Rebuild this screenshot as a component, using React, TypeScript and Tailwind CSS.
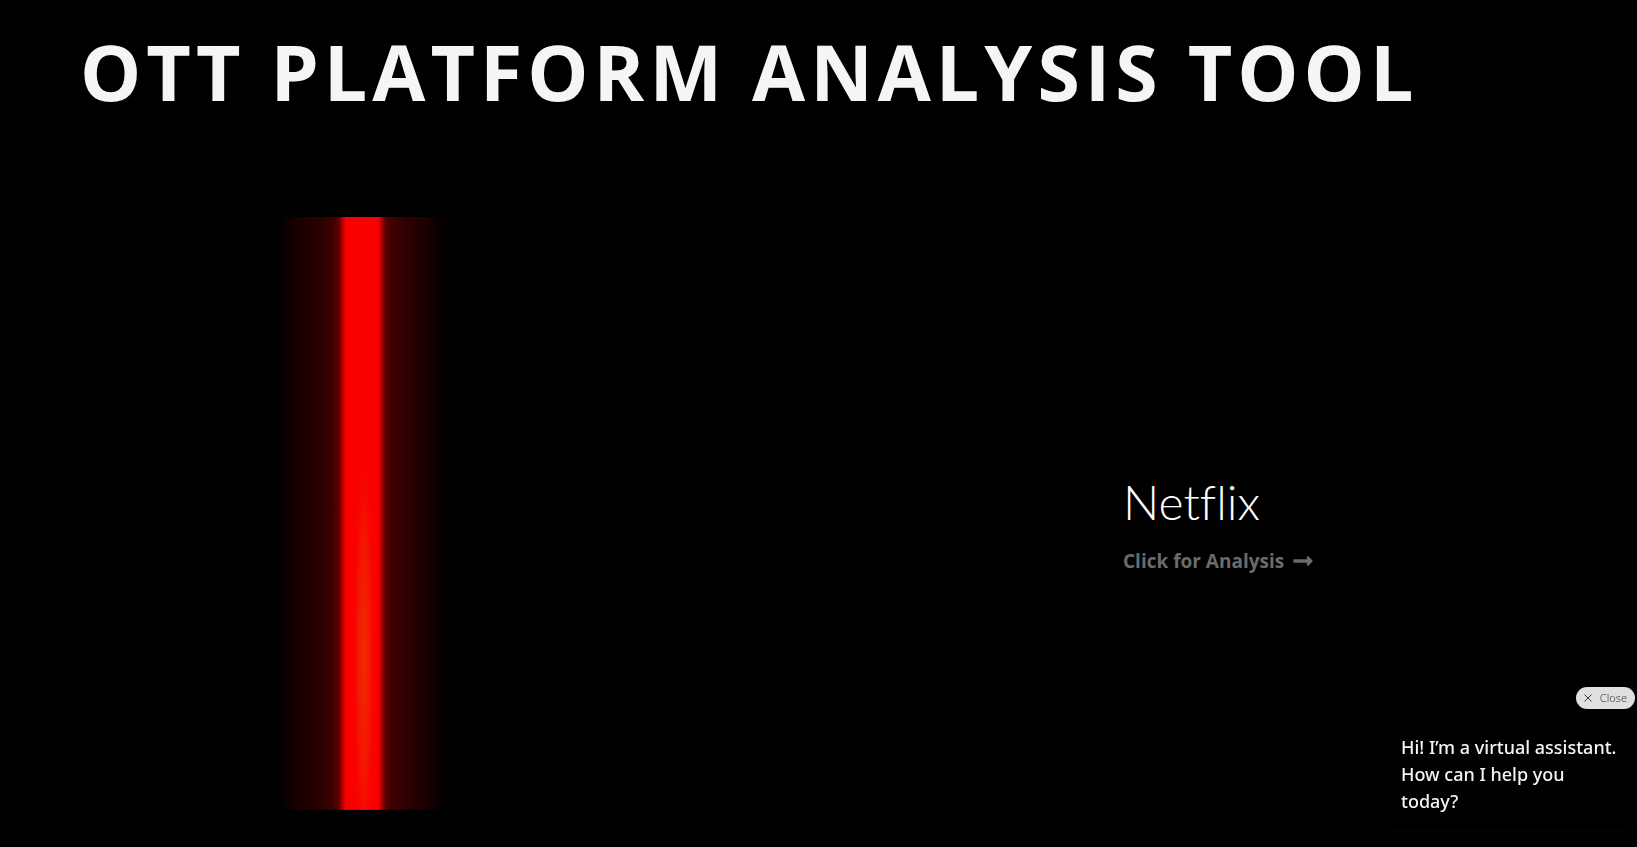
import { FaLongArrowAltRight } from "react-icons/fa";
import { useState } from "react";

function NeonBeam() {
  return (
    <svg
      viewBox="0 0 1054 593"
      preserveAspectRatio="none"
      className="block aspect-video w-full"
      role="img"
      aria-label="Red light beam"
    >
      <defs>
        <linearGradient id="beam" gradientUnits="userSpaceOnUse" x1="263" x2="463" y1="0" y2="0">
          <stop offset="0" stopColor="#000000" />
          <stop offset="0.09" stopColor="#030000" />
          <stop offset="0.16" stopColor="#160000" />
          <stop offset="0.26" stopColor="#260000" />
          <stop offset="0.345" stopColor="#3a0000" />
          <stop offset="0.38" stopColor="#600000" />
          <stop offset="0.395" stopColor="#b00000" />
          <stop offset="0.415" stopColor="#fa0000" />
          <stop offset="0.5" stopColor="#f60200" />
          <stop offset="0.565" stopColor="#fc0000" />
          <stop offset="0.58" stopColor="#f00000" />
          <stop offset="0.595" stopColor="#a00000" />
          <stop offset="0.615" stopColor="#580000" />
          <stop offset="0.64" stopColor="#400000" />
          <stop offset="0.73" stopColor="#2c0000" />
          <stop offset="0.82" stopColor="#1a0000" />
          <stop offset="0.9" stopColor="#050000" />
          <stop offset="1" stopColor="#000000" />
        </linearGradient>
        <radialGradient id="core">
          <stop offset="0" stopColor="#f02c00" />
          <stop offset="0.5" stopColor="#f22000" stopOpacity="0.7" />
          <stop offset="1" stopColor="#fa0000" stopOpacity="0" />
        </radialGradient>
      </defs>
      <rect width="1054" height="593" fill="url(#beam)" />
      <ellipse cx="364" cy="440" rx="12" ry="230" fill="url(#core)" />
    </svg>
  );
}

function Assistant() {
  const [open, setOpen] = useState(true);
  if (!open) return null;
  return (
    <aside className="fixed right-0 bottom-[15px] flex w-64 flex-col items-end gap-2 font-['Noto_Sans',sans-serif]">
      <button
        type="button"
        onClick={() => setOpen(false)}
        className="mr-0.5 flex h-[22px] items-center gap-2 rounded-full bg-[#e0e0e0] px-2 text-[11px] font-light text-[#393939]"
      >
        <svg viewBox="0 0 8 8" className="size-2" fill="none" stroke="currentColor" aria-hidden="true">
          <path d="M.5.5l7 7M7.5.5l-7 7" />
        </svg>
        Close
      </button>
      <p className="w-full rounded-xl border border-[#050505] py-4 pl-[19px] text-lg leading-[27px] font-medium text-[#f4f4f4]">
        Hi! I’m a virtual assistant.
        <br />
        How can I help you
        <br />
        today?
      </p>
    </aside>
  );
}

export default function App() {
  return (
    <div className="min-h-screen bg-black font-['Open_Sans',sans-serif]">
      <header className="px-20 pt-[22px] pb-[95px]">
        <h1 className="text-[77px] leading-[100px] font-bold tracking-[5px] whitespace-nowrap text-[#f5f5f5]">
          OTT PLATFORM ANALYSIS TOOL
        </h1>
      </header>
      <main className="grid grid-cols-[1054fr_583fr] items-center">
        <NeonBeam />
        <section className="pt-5 pl-[69px]">
          <h2 className="font-['Lato',sans-serif] text-[48px] leading-[62px] font-light text-white [font-variant-ligatures:none]">
            Netflix
          </h2>
          <a
            href="#netflix"
            className="mt-3.5 flex items-center gap-2 text-[19px] leading-7 font-bold text-[#6b6b6b]"
          >
            Click for Analysis
            <FaLongArrowAltRight className="size-[22px]" aria-hidden="true" />
          </a>
        </section>
      </main>
      <Assistant />
    </div>
  );
}
